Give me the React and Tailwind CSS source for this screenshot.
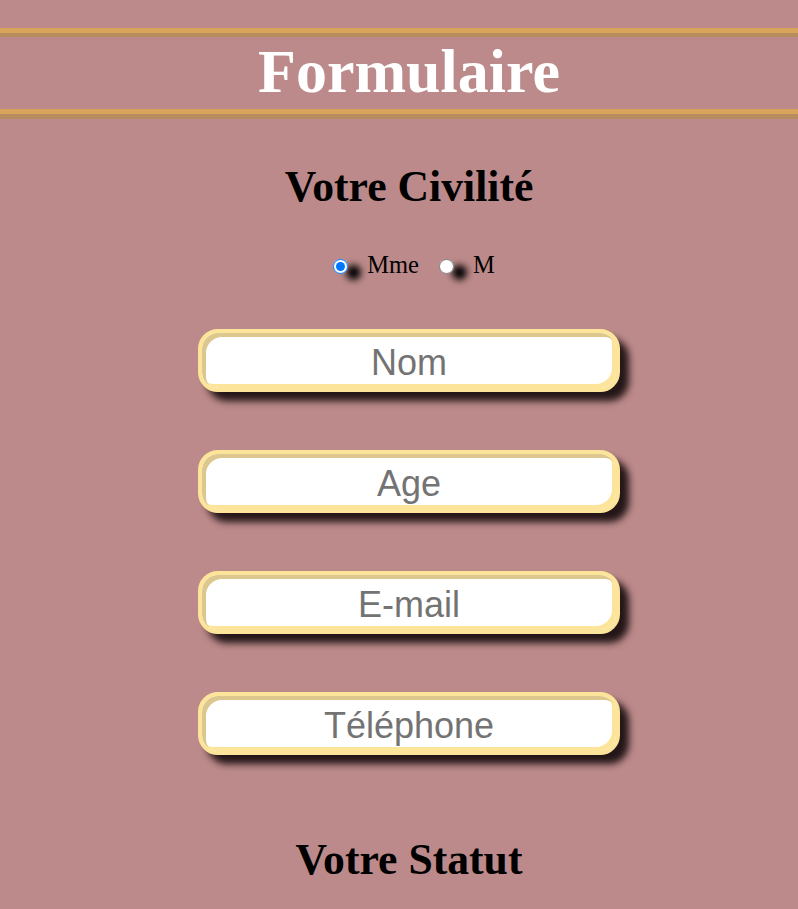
import { useState } from "react";

const fields = ["Nom", "Age", "E-mail", "Téléphone"];

const Radio = ({ id, checked, onChange, className }) => (
  <span
    className={`mt-[8px] flex h-[15px] w-[15px] rounded-full shadow-[13px_6px_7px_#000] ${className}`}
  >
    <input
      type="radio"
      name="civilite"
      id={id}
      checked={checked}
      onChange={onChange}
      className="m-0 h-[15px] w-[15px]"
    />
  </span>
);

const App = () => {
  const [civilite, setCivilite] = useState("mme");

  return (
    <div className="min-h-screen bg-[#bc8a8a] pt-[28px] pb-10 font-['Liberation_Serif','Times_New_Roman',serif]">
      <header className="border-t-[5px] border-b-[5px] border-t-[#d8a35a] border-b-[#b88c5e]">
        <div className="border-t-[4px] border-b-[5px] border-t-[#b88c5e] border-b-[#d8a35a]">
          <h1 className="h-[72px] pl-[20px] text-center text-[62px] font-bold leading-[68px] text-white">
            Formulaire
          </h1>
        </div>
      </header>

      <main className="flex flex-col items-center pl-[20px]">
        <h2 className="mt-[43px] text-[43.7px] font-bold leading-[49px] text-black">
          Votre Civilité
        </h2>

        <div className="mt-[40px] flex h-[28px] items-start pl-[10px] text-[24.5px] leading-[28px] text-black">
          <Radio
            id="mme"
            checked={civilite === "mme"}
            onChange={() => setCivilite("mme")}
          />
          <label htmlFor="mme" className="ml-[19px]">
            Mme
          </label>
          <Radio
            id="m"
            checked={civilite === "m"}
            onChange={() => setCivilite("m")}
            className="ml-[20px]"
          />
          <label htmlFor="m" className="ml-[19px]">
            M
          </label>
        </div>

        <form className="mt-[50px] flex flex-col gap-[58px]">
          {fields.map((field) => (
            <input
              key={field}
              type="text"
              placeholder={field}
              className="h-[63px] w-[422px] rounded-[20px] border-[4px] border-[#fce59a] bg-white pt-[5px] text-center font-['Liberation_Sans',Arial,sans-serif] text-[36px] text-[#333] shadow-[inset_4px_4px_0_#dcc88e,inset_-4px_-4px_0_#fce59a,9px_9px_7px_rgba(20,10,12,0.9)] outline-none placeholder:text-[#737373]"
            />
          ))}
        </form>

        <h2 className="mt-[80px] text-[43.7px] font-bold leading-[49px] text-black">
          Votre Statut
        </h2>
      </main>
    </div>
  );
};

export default App;
